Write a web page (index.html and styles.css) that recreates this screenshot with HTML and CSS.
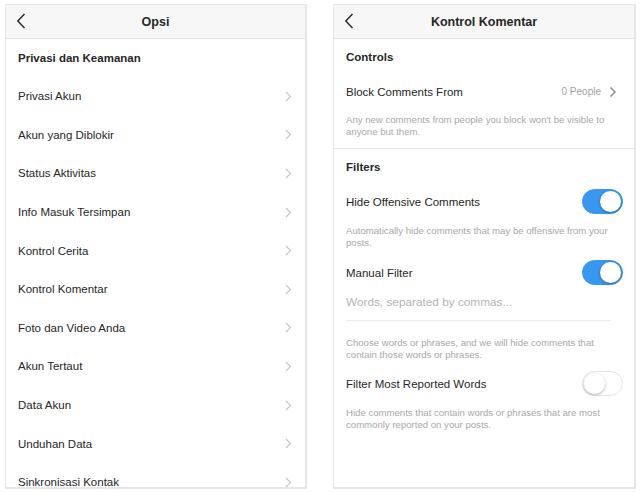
FILE: index.html
```html
<!DOCTYPE html>
<html lang="id">
<head>
<meta charset="utf-8">
<title>Opsi / Kontrol Komentar</title>
<link rel="stylesheet" href="styles.css">
</head>
<body>
<div class="stage">
  <section class="panel">
    <header class="bar">
      <svg class="back" width="10" height="16" viewBox="0 0 10 16"><path d="M8.5 1 L1.8 8 L8.5 15" fill="none" stroke="#262626" stroke-width="1.4"/></svg>
      <h1>Opsi</h1>
    </header>
    <div class="list">
      <div class="sec">Privasi dan Keamanan</div>
      <div class="item"><span>Privasi Akun</span><svg class="chev" width="7" height="11" viewBox="0 0 7 11"><path d="M1 1 L5.5 5.5 L1 10" fill="none" stroke="#c4c4c8" stroke-width="1.1"/></svg></div>
      <div class="item"><span>Akun yang Diblokir</span><svg class="chev" width="7" height="11" viewBox="0 0 7 11"><path d="M1 1 L5.5 5.5 L1 10" fill="none" stroke="#c4c4c8" stroke-width="1.1"/></svg></div>
      <div class="item"><span>Status Aktivitas</span><svg class="chev" width="7" height="11" viewBox="0 0 7 11"><path d="M1 1 L5.5 5.5 L1 10" fill="none" stroke="#c4c4c8" stroke-width="1.1"/></svg></div>
      <div class="item"><span>Info Masuk Tersimpan</span><svg class="chev" width="7" height="11" viewBox="0 0 7 11"><path d="M1 1 L5.5 5.5 L1 10" fill="none" stroke="#c4c4c8" stroke-width="1.1"/></svg></div>
      <div class="item"><span>Kontrol Cerita</span><svg class="chev" width="7" height="11" viewBox="0 0 7 11"><path d="M1 1 L5.5 5.5 L1 10" fill="none" stroke="#c4c4c8" stroke-width="1.1"/></svg></div>
      <div class="item"><span>Kontrol Komentar</span><svg class="chev" width="7" height="11" viewBox="0 0 7 11"><path d="M1 1 L5.5 5.5 L1 10" fill="none" stroke="#c4c4c8" stroke-width="1.1"/></svg></div>
      <div class="item"><span>Foto dan Video Anda</span><svg class="chev" width="7" height="11" viewBox="0 0 7 11"><path d="M1 1 L5.5 5.5 L1 10" fill="none" stroke="#c4c4c8" stroke-width="1.1"/></svg></div>
      <div class="item"><span>Akun Tertaut</span><svg class="chev" width="7" height="11" viewBox="0 0 7 11"><path d="M1 1 L5.5 5.5 L1 10" fill="none" stroke="#c4c4c8" stroke-width="1.1"/></svg></div>
      <div class="item"><span>Data Akun</span><svg class="chev" width="7" height="11" viewBox="0 0 7 11"><path d="M1 1 L5.5 5.5 L1 10" fill="none" stroke="#c4c4c8" stroke-width="1.1"/></svg></div>
      <div class="item"><span>Unduhan Data</span><svg class="chev" width="7" height="11" viewBox="0 0 7 11"><path d="M1 1 L5.5 5.5 L1 10" fill="none" stroke="#c4c4c8" stroke-width="1.1"/></svg></div>
      <div class="item"><span>Sinkronisasi Kontak</span><svg class="chev" width="7" height="11" viewBox="0 0 7 11"><path d="M1 1 L5.5 5.5 L1 10" fill="none" stroke="#c4c4c8" stroke-width="1.1"/></svg></div>
    </div>
  </section>

  <section class="panel right">
    <header class="bar">
      <svg class="back" width="10" height="16" viewBox="0 0 10 16"><path d="M8.5 1 L1.8 8 L8.5 15" fill="none" stroke="#262626" stroke-width="1.4"/></svg>
      <h1>Kontrol Komentar</h1>
    </header>
    <div class="body">
      <div class="group">
        <div class="title">Controls</div>
        <div class="row"><span>Block Comments From</span><span class="meta">0 People<svg width="8" height="12" viewBox="0 0 8 12"><path d="M1.5 1.5 L6 6 L1.5 10.5" fill="none" stroke="#8e8e8e" stroke-width="1.5"/></svg></span></div>
        <p class="desc d1">Any new comments from people you block won't be visible to anyone but them.</p>
      </div>
      <div class="group last">
        <div class="title">Filters</div>
        <div class="row"><span>Hide Offensive Comments</span><span class="toggle on"></span></div>
        <p class="desc d2">Automatically hide comments that may be offensive from your posts.</p>
        <div class="row"><span>Manual Filter</span><span class="toggle on"></span></div>
        <div class="input">Words, separated by commas...</div>
        <p class="desc d3">Choose words or phrases, and we will hide comments that contain those words or phrases.</p>
        <div class="row r4"><span>Filter Most Reported Words</span><span class="toggle"></span></div>
        <p class="desc d4">Hide comments that contain words or phrases that are most commonly reported on your posts.</p>
      </div>
    </div>
  </section>
</div>
</body>
</html>
```

FILE: styles.css
```css
* { box-sizing: border-box; }
html, body { margin: 0; padding: 0; background: #fff; }
body {
  font-family: "Liberation Sans", Arial, sans-serif;
  color: #262626;
}
.stage {
  display: flex;
  gap: 26px;
  padding: 4px 0 0 5px;
  height: 493px;
}
.panel {
  width: 302px;
  height: 485px;
  border: 1px solid #e6e6e6;
  border-right-width: 2px;
  border-bottom-width: 2px;
  overflow: hidden;
  background: #fff;
}
.right { width: 303px; }
.bar {
  height: 34px;
  background: #f7f7f7;
  border-bottom: 1px solid #e0e0e0;
  display: flex;
  align-items: center;
  justify-content: center;
  position: relative;
}
.bar h1 {
  margin: 0;
  font-size: 12.5px;
  font-weight: bold;
  color: #262626;
}
.back {
  position: absolute;
  left: 10px;
  top: 8px;
}
.list { display: flex; flex-direction: column; }
.sec {
  height: 38px;
  flex: none;
  padding: 0 12px;
  display: flex;
  align-items: center;
  font-size: 11.5px;
  font-weight: bold;
}
.item {
  height: 38.6px;
  flex: none;
  padding: 0 13px 0 12px;
  display: flex;
  align-items: center;
  justify-content: space-between;
  font-size: 11.5px;
}
.body { padding: 0 12px 0 12px; }
.group { border-bottom: 1px solid #e6e6e6; margin: 0 -12px; padding: 0 12px 11px; }
.group.last { border-bottom: 0; }
.title {
  height: 36px;
  display: flex;
  align-items: center;
  font-size: 11.5px;
  font-weight: bold;
}
.row {
  height: 33px;
  display: flex;
  align-items: center;
  justify-content: space-between;
  font-size: 11.5px;
}
.meta {
  display: flex;
  align-items: center;
  gap: 8px;
  color: #a0a0a0;
  font-size: 10px;
  margin-right: 5px;
}
.desc {
  margin: 0;
  font-size: 9.6px;
  line-height: 11.5px;
  color: #a8a8a8;
  padding-right: 10px;
}
.d1 { padding-top: 6px; }
.d2 { padding-top: 7px; margin-bottom: 8px; }
.input {
  margin: 0 12px 0 0;
  padding: 4px 0 9px;
  line-height: 18px;
  font-size: 11.8px;
  color: #b4b4b4;
  border-bottom: 1px solid #ececec;
}
.d3 { padding-top: 16px; }
.r4 { margin-top: 7px; }
.d4 { padding-top: 7px; }
.toggle {
  width: 41px;
  height: 25px;
  border-radius: 13px;
  position: relative;
  background: #fff;
  border: 1px solid #e4e4e4;
  flex: none;
  margin-right: -1px;
}
.toggle::after {
  content: "";
  position: absolute;
  top: 1px;
  left: 1px;
  width: 21px;
  height: 21px;
  border-radius: 50%;
  background: #fff;
  box-shadow: 0 1px 3px rgba(0,0,0,0.3);
}
.toggle.on { background: #3897f0; border-color: #3897f0; }
.toggle.on::after { left: auto; right: 1px; }
```
